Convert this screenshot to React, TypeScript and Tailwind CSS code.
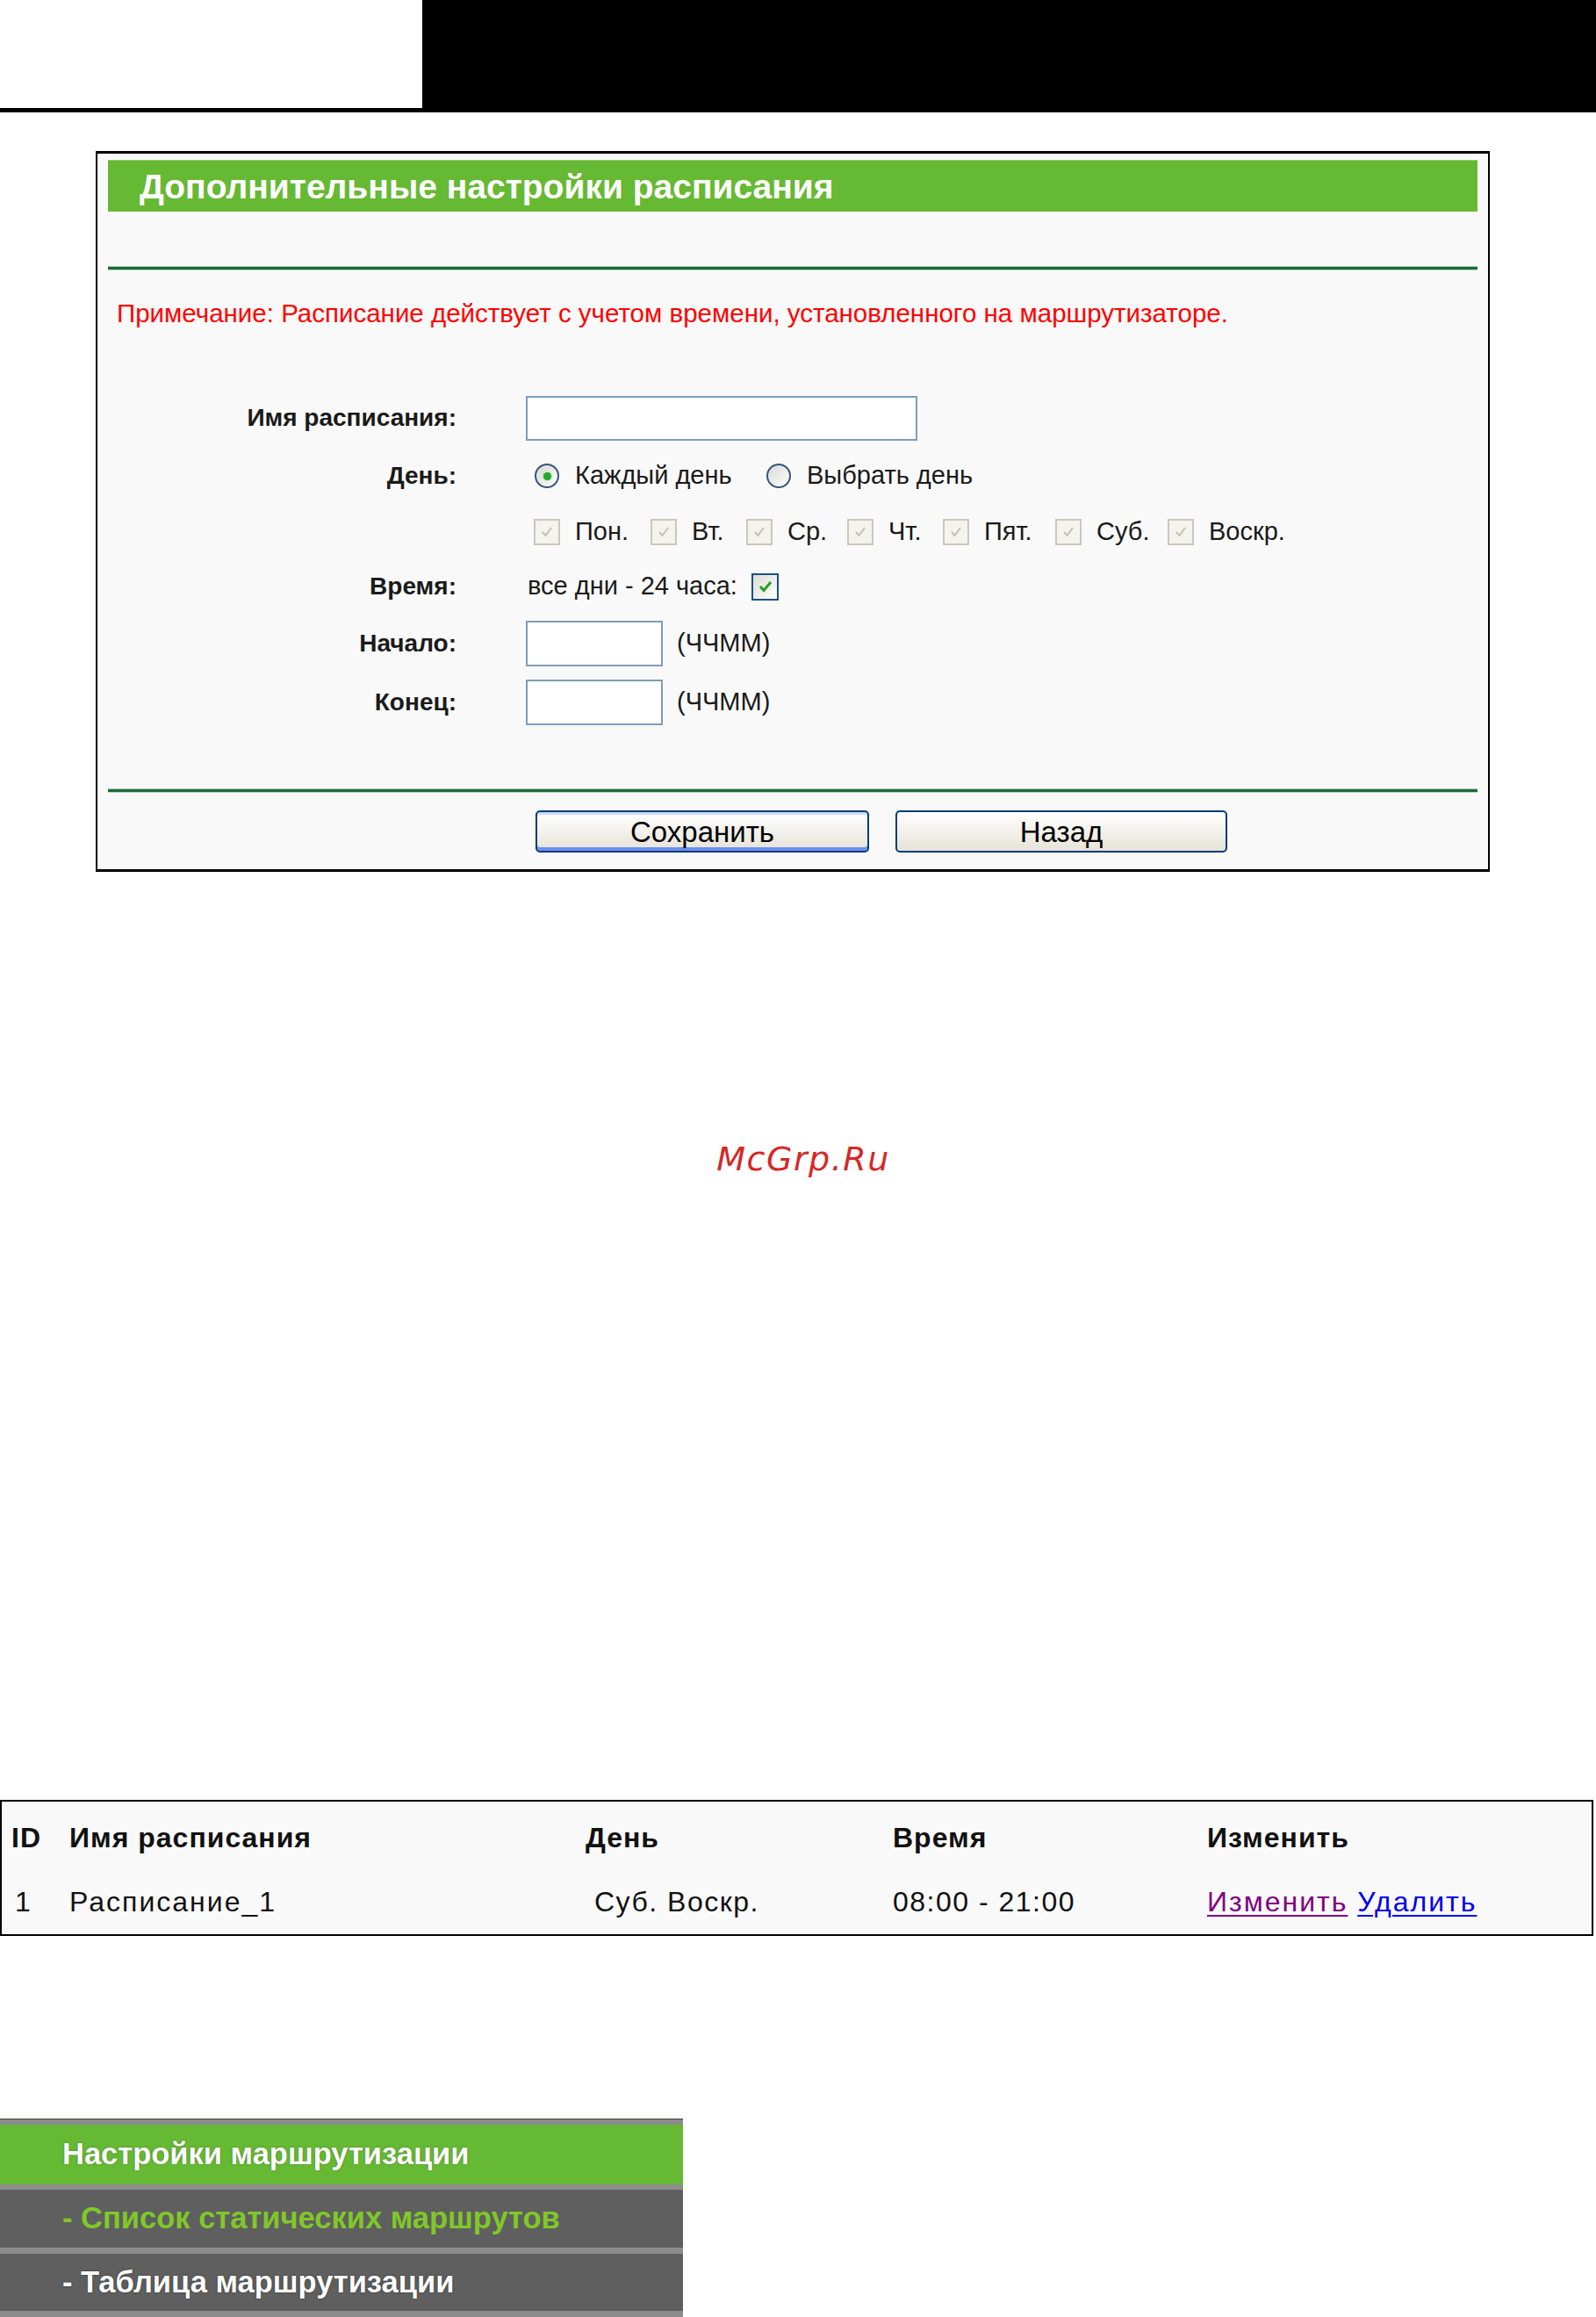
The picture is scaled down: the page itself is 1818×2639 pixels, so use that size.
import React from "react";

const dayItems = [
  { label: "Пон.", w: "w-[133px]" },
  { label: "Вт.", w: "w-[109px]" },
  { label: "Ср.", w: "w-[115px]" },
  { label: "Чт.", w: "w-[109px]" },
  { label: "Пят.", w: "w-[128px]" },
  { label: "Суб.", w: "w-[128px]" },
  { label: "Воскр.", w: "w-auto" },
];

function DisabledCheck() {
  return (
    <div className="w-[30px] h-[30px] border-2 border-[#cac8bb] bg-[#f4f3ee] flex items-center justify-center">
      <svg width="18" height="18" viewBox="0 0 18 18">
        <path d="M4 9 L7.5 13 L14 4" fill="none" stroke="#c3c0ad" strokeWidth="2" />
      </svg>
    </div>
  );
}

function Radio({ checked }: { checked?: boolean }) {
  return (
    <div className="w-[28px] h-[28px] rounded-full border-2 border-[#33577d] bg-gradient-to-br from-[#d8d8d2] to-white flex items-center justify-center">
      {checked && <div className="w-[9px] h-[9px] rounded-full bg-[#28a828] shadow-[0_0_2px_#5fd05f]" />}
    </div>
  );
}

function Row({ label, h, children }: { label: string; h: string; children?: React.ReactNode }) {
  return (
    <div className={`flex items-center ${h}`}>
      <div className="w-[397px] text-right font-bold text-[28px] text-[#1a1a1a]">{label}</div>
      <div className="ml-[79px] flex items-center text-[29px] text-[#1a1a1a]">{children}</div>
    </div>
  );
}

function TextBox({ w }: { w: string }) {
  return <div className={`${w} h-[52px] bg-white border-2 border-[#7f9db9]`} />;
}

export default function App() {
  return (
    <div className="min-h-screen bg-white font-['Liberation_Sans',Arial,sans-serif]">
      {/* top strip */}
      <div className="h-[128px] bg-black flex">
        <div className="w-[481px] h-[123px] bg-white" />
      </div>

      {/* schedule panel */}
      <div className="pt-[44px] pl-[109px]">
        <div className="w-[1588px] border-x-2 border-y-[3px] border-black bg-[#f9f9f9] px-3 pt-[7px] pb-[19px]">
          <div className="h-[59px] bg-[#66b933] border-t border-[#9bd274] flex items-center pl-[36px]">
            <span className="text-white font-bold text-[39px] leading-none">Дополнительные настройки расписания</span>
          </div>
          <div className="h-[63px]" />
          <div className="h-[3px] bg-[#1d6a3a] shadow-[0_1px_0_#b6d8c0,0_-1px_0_#a5cdb1]" />

          <div className="mt-[34px] pl-[10px] text-[29.5px] leading-[32px] text-[#ff0000]">
            Примечание: Расписание действует с учетом времени, установленного на маршрутизаторе.
          </div>

          <div className="mt-[70px]">
            <Row label="Имя расписания:" h="h-[66px]">
              <div className="w-[446px] h-[51px] bg-white border-2 border-[#7f9db9]" />
            </Row>
            <Row label="День:" h="h-[66px]">
              <div className="pl-[10px] flex items-center w-[274px]">
                <Radio checked />
                <span className="ml-[18px]">Каждый день</span>
              </div>
              <div className="flex items-center">
                <Radio />
                <span className="ml-[18px]">Выбрать день</span>
              </div>
            </Row>
            <Row label="" h="h-[62px]">
              <div className="pl-[9px] flex items-center">
                {dayItems.map((d) => (
                  <div key={d.label} className={`flex items-center ${d.w}`}>
                    <DisabledCheck />
                    <span className="ml-[17px]">{d.label}</span>
                  </div>
                ))}
              </div>
            </Row>
            <Row label="Время:" h="h-[62px]">
              <span className="ml-[2px] w-[255px]">все дни - 24 часа:</span>
              <div className="w-[31px] h-[31px] border-2 border-[#1c5180] bg-gradient-to-br from-[#dcdcd4] to-white flex items-center justify-center">
                <svg width="20" height="20" viewBox="0 0 20 20">
                  <path d="M4 10 L8 14.5 L16 5" fill="none" stroke="#21a121" strokeWidth="3" />
                </svg>
              </div>
            </Row>
            <Row label="Начало:" h="h-[68px]">
              <TextBox w="w-[156px]" />
              <span className="ml-[16px]">(ЧЧММ)</span>
            </Row>
            <Row label="Конец:" h="h-[66px]">
              <TextBox w="w-[156px]" />
              <span className="ml-[16px]">(ЧЧММ)</span>
            </Row>
          </div>

          <div className="mt-[66px] h-[3px] bg-[#1d6a3a] shadow-[0_1px_0_#b6d8c0,0_-1px_0_#a5cdb1]" />

          <div className="mt-[21px] pl-[487px] flex gap-[30px]">
            <button className="w-[380px] h-[48px] rounded-[5px] border-2 border-[#003c74] bg-gradient-to-b from-white to-[#e6e3d8] shadow-[inset_0_3px_0_#c6ddfb,inset_0_-4px_0_#6d8ef0] text-[33px] leading-none text-black">
              Сохранить
            </button>
            <button className="w-[378px] h-[48px] rounded-[5px] border-2 border-[#003c74] bg-gradient-to-b from-white to-[#e6e3d8] text-[33px] leading-none text-black">
              Назад
            </button>
          </div>
        </div>
      </div>

      {/* watermark */}
      <div className="mt-[305px] pl-[12px] text-center h-[44px] leading-[44px] text-[38px] italic tracking-[1.5px] text-[#d62828] font-['DejaVu_Sans',sans-serif]">
        McGrp.Ru
      </div>

      {/* schedule list */}
      <div className="mt-[708px] w-[1815px] border-2 border-black bg-[#f9f9f9] pb-[5px] text-[32px] text-[#111]">
        <div className="flex items-center h-[82px] font-bold pl-[11px] tracking-[1px]">
          <div className="w-[66px]">ID</div>
          <div className="w-[588px]">Имя расписания</div>
          <div className="w-[350px]">День</div>
          <div className="w-[358px]">Время</div>
          <div>Изменить</div>
        </div>
        <div className="flex items-center h-[64px] pl-[11px] tracking-[1.5px]">
          <div className="w-[66px] pl-[4px]">1</div>
          <div className="w-[588px] tracking-[2px]">Расписание_1</div>
          <div className="w-[350px] pl-[10px]">Суб. Воскр.</div>
          <div className="w-[358px]">08:00 - 21:00</div>
          <div className="tracking-[2px]">
            <a className="text-[#800080] underline decoration-2 underline-offset-4">Изменить</a>{" "}
            <a className="text-[#0000ee] underline decoration-2 underline-offset-4">Удалить</a>
          </div>
        </div>
      </div>

      {/* side menu */}
      <div className="mt-[208px] w-[778px] border-t border-[#3a3a3a] bg-[#8c8c8c] font-bold text-[34.5px]">
        <div className="h-[6px]" />
        <div className="h-[68px] bg-[#66b933] flex items-center pl-[71px] text-white [text-shadow:0_0_2px_#3d6e1f]">
          Настройки маршрутизации
        </div>
        <div className="h-[6px]" />
        <div className="h-[66px] bg-[#5f5f5f] flex items-center pl-[71px] text-[#80c828]">
          - Список статических маршрутов
        </div>
        <div className="h-[7px]" />
        <div className="h-[65px] bg-[#5f5f5f] flex items-center pl-[71px] text-white [text-shadow:0_0_2px_#222]">
          - Таблица маршрутизации
        </div>
        <div className="h-[7px]" />
      </div>
    </div>
  );
}
